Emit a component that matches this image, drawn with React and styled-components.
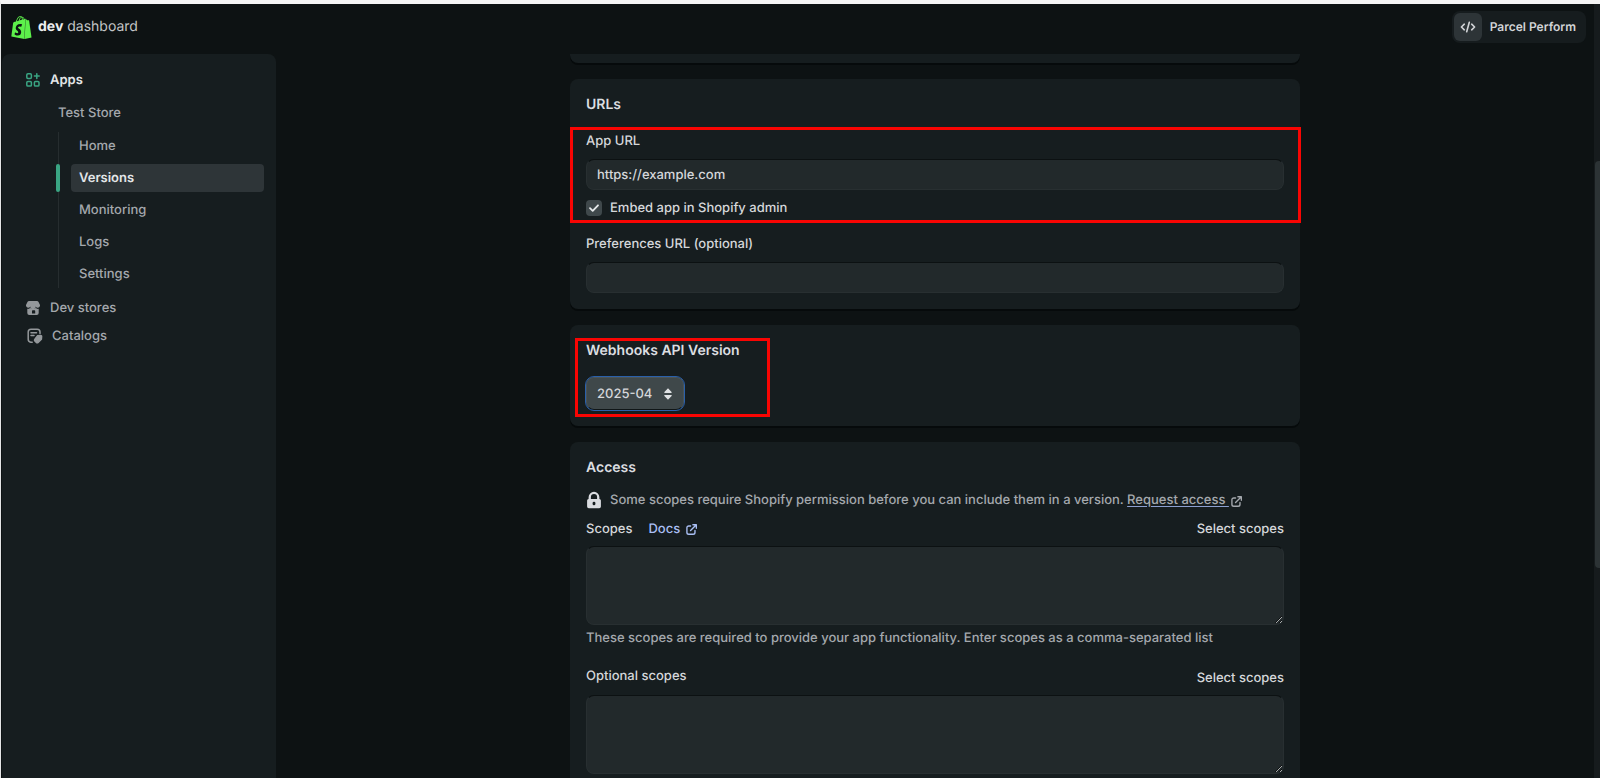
import React from "react";
import styled, { createGlobalStyle } from "styled-components";
import { SiShopify } from "react-icons/si";

const GlobalStyle = createGlobalStyle`
  *, *::before, *::after { box-sizing: border-box; }
  body {
    margin: 0;
    background: #0d1213;
    color: #d5d7da;
    font-family: Inter, "Liberation Sans", sans-serif;
    font-size: 13px;
    font-weight: 500;
    line-height: 20px;
    color-scheme: dark;
    text-rendering: geometricPrecision;
  }
  button, input, select, textarea { font: inherit; color: inherit; margin: 0; text-rendering: inherit; }
  a { color: inherit; text-decoration: none; }
  ul { list-style: none; margin: 0; padding: 0; }
  h2, p { margin: 0; }
`;

const Page = styled.div`
  height: 100vh;
  display: flex;
  overflow: hidden;
  border-top: 4px solid #f4f5f5;
  border-left: 1px solid #e4e5e5;
`;

const Shell = styled.div`
  flex: 1;
  min-width: 0;
  display: flex;
  flex-direction: column;
`;

const Header = styled.header`
  flex: none;
  height: 50px;
  padding: 0 8px 4px 9px;
  display: flex;
  align-items: center;
  justify-content: space-between;
`;

const Brand = styled.a`
  display: flex;
  align-items: center;
  gap: 5px;
  font-size: 14px;
  color: #c3c5c7;
  font-weight: 400;
  b { font-weight: 700; color: #eceeef; }
  svg { color: #5df04b; }
`;

const Account = styled.button`
  display: flex;
  align-items: center;
  gap: 8px;
  height: 32px;
  padding: 2px 10px 2px 2px;
  border: 0;
  border-radius: 8px;
  background: #161c1e;
  color: #d2d4d7;
  font-size: 12px;
  font-weight: 600;
`;

const AccountIcon = styled.span`
  width: 28px;
  height: 28px;
  display: grid;
  place-items: center;
  border-radius: 6px;
  background: #2d3437;
`;

const Body = styled.div`
  flex: 1;
  min-height: 0;
  display: flex;
`;

const Sidebar = styled.nav`
  flex: none;
  width: 274px;
  margin-left: 1px;
  padding: 12px 12px 12px 22px;
  border-radius: 8px 8px 0 0;
  background: #161d1f;
`;

const NavLink = styled.a`
  display: flex;
  align-items: center;
  gap: 9px;
  height: 28px;
  padding-left: 1px;
  color: ${(p) => (p.$active ? "#e3e6e8" : "#a4a8ad")};
  font-weight: ${(p) => (p.$active ? 600 : 500)};
  svg { flex: none; color: ${(p) => (p.$active ? "#3aa583" : "#94989b")}; }
`;

const StoreLink = styled.a`
  display: block;
  margin: 5px 0 5px 34px;
  height: 28px;
  line-height: 28px;
  color: #a4a8ad;
`;

const SubList = styled.ul`
  display: grid;
  gap: 4px;
  margin: 0 0 6px 34px;
  border-left: 1px solid #262d2f;
`;

const SubItem = styled.li`
  position: relative;
  padding-left: 12px;
  &::before {
    content: "";
    display: ${(p) => (p.$active ? "block" : "none")};
    position: absolute;
    left: -3px;
    top: 0;
    width: 4px;
    height: 100%;
    border-radius: 2px;
    background: #3aa583;
  }
`;

const SubLink = styled.a`
  display: block;
  height: 28px;
  line-height: 28px;
  padding-left: 8px;
  border-radius: 4px;
  background: ${(p) => (p.$active ? "#2e3538" : "transparent")};
  color: ${(p) => (p.$active ? "#e3e6e8" : "#a4a8ad")};
  font-weight: ${(p) => (p.$active ? 600 : 500)};
`;

const Main = styled.main`
  flex: 1;
  min-width: 0;
  overflow: hidden;
  display: flex;
  flex-direction: column;
  align-items: center;
  gap: 16px;
`;

const Card = styled.section`
  flex: none;
  width: 100%;
  max-width: 730px;
  padding: 16px;
  border-radius: 8px;
  background: #161d1f;
  box-shadow: 0 2px 0 #060a0b;
`;

const CardEnd = styled(Card)`
  height: 9px;
  padding: 0;
  border-radius: 0 0 8px 8px;
`;

const CardTitle = styled.h2`
  display: block;
  font-size: 14px;
  line-height: 20px;
  font-weight: 600;
  color: #dcdee1;
`;

const Marked = styled.div`
  position: relative;
  margin-top: 16px;
`;

const Outline = styled.div`
  position: absolute;
  inset: ${(p) => p.$inset};
  border: 3px solid #f90503;
  pointer-events: none;
`;

const Field = styled.div`
  display: grid;
  gap: 8px;
  margin-top: ${(p) => p.$top || 0}px;
`;

const TextInput = styled.input`
  width: 100%;
  height: 31px;
  padding: 0 10px;
  border: 1px solid #282f31;
  border-top-color: #0c1112;
  border-radius: 8px;
  background: #22292b;
  outline: 0;
`;

const CheckLabel = styled.label`
  display: flex;
  align-items: center;
  gap: 8px;
  margin-top: 8px;
`;

const CheckWrap = styled.span`
  display: grid;
  width: 16px;
  height: 16px;
  > * { grid-area: 1 / 1; }
  svg { pointer-events: none; color: #e6e9eb; }
`;

const Checkbox = styled.input`
  appearance: none;
  width: 16px;
  height: 16px;
  border-radius: 4px;
  background: #3f484b;
`;

const Versions = styled.div`
  position: relative;
  width: fit-content;
`;

const SelectWrap = styled.div`
  display: grid;
  width: 98px;
  margin-top: 16px;
  align-items: center;
  > * { grid-area: 1 / 1; }
  svg { justify-self: end; margin-right: 12px; pointer-events: none; color: #dfe2e4; }
`;

const Select = styled.select`
  appearance: none;
  width: 100%;
  height: 33px;
  padding: 0 10px;
  border: 1px solid #4b5456;
  border-bottom-color: #101617;
  border-radius: 8px;
  background: #3f484a;
  outline: 1px solid #2a60aa;
`;

const Notice = styled.p`
  display: flex;
  align-items: center;
  gap: 8px;
  margin: 12px 0 9px;
  color: #a4a8ad;
`;

const AccessLink = styled.a`
  svg { margin-left: 2px; vertical-align: -3px; }
  span { text-decoration: underline; text-decoration-color: #8c9fd0; text-underline-offset: 2px; white-space: pre; }
`;

const ScopeHead = styled.div`
  display: flex;
  align-items: ${(p) => (p.$offset ? "flex-end" : "center")};
  gap: 16px;
  height: ${(p) => (p.$offset ? 22 : 20)}px;
  margin-bottom: 7px;
  label { align-self: flex-start; }
`;

const DocsLink = styled.a`
  display: flex;
  align-items: center;
  gap: 6px;
  color: #a9bff4;
`;

const PlainButton = styled.button`
  margin-left: auto;
  padding: 0;
  border: 0;
  background: none;
`;

const TextArea = styled.textarea`
  display: block;
  width: 100%;
  height: 79px;
  padding: 6px 10px;
  border: 1px solid #282f31;
  border-top-color: #0c1112;
  border-radius: 8px;
  background: #22292b;
  outline: 0;
  resize: vertical;
`;

const Help = styled.p`
  margin: 3px 0 18px;
  color: #a4a8ad;
`;

const ScrollTrack = styled.div`
  flex: none;
  width: 6px;
  padding-top: 157px;
  background: #161b1d;
`;

const ScrollThumb = styled.div`
  margin-left: 1px;
  height: 66%;
  border-radius: 4px 0 0 4px;
  background: #2c3335;
`;

const AppsIcon = () => (
  <svg width="16" height="16" viewBox="0 0 16 16" fill="none" stroke="currentColor" strokeWidth="1.5" strokeLinecap="round">
    <rect x="1.8" y="1.8" width="4.6" height="4.6" rx="1.1" />
    <rect x="1.8" y="9.4" width="4.6" height="4.6" rx="1.1" />
    <rect x="9.4" y="9.4" width="4.6" height="4.6" rx="1.1" />
    <path d="M11.8 1.7v4.8M9.4 4.1h4.8" />
  </svg>
);

const StoreIcon = () => (
  <svg width="16" height="16" viewBox="0 0 16 16" fill="currentColor">
    <path d="M4 1h8c.6 0 1.100.3 1.400.8l1.500 3c.2.300.2.700.1 1A2.300 2.300 0 0 1 10.700 6.600 2.300 2.300 0 0 1 5.300 6.600 2.300 2.300 0 0 1 1 5.800c-.1-.3 0-.7.1-1l1.500-3C2.900 1.300 3.400 1 4 1z" />
    <path fillRule="evenodd" d="M2.300 8.800c1 .3 2.100 0 3-.7 1.600 1.200 3.800 1.200 5.400 0 .9.7 2 1 3 .7V13a2 2 0 0 1-2 2H4.300a2 2 0 0 1-2-2zM8 10.200c-.6 0-1 .4-1 1v2.300h3.200v-2.300c0-.6-.4-1-1-1z" />
  </svg>
);

const CatalogIcon = () => (
  <svg width="18" height="18" viewBox="0 0 18 18" fill="none" stroke="currentColor" strokeWidth="1.5" strokeLinecap="round">
    <path d="M7.200 15.300H5.800a3 3 0 0 1-2.600-3V5A2.800 2.800 0 0 1 6 2.200h6.200A2.800 2.800 0 0 1 15 5v1.500" />
    <path d="M6 5.700h5.500M6 8.600h3" />
    <path d="M12.600 8.700l3-.3a.9.900 0 0 1 1 1l-.2 2.800-3.300 3.300a1.200 1.200 0 0 1-1.700 0l-1.500-1.500a1.200 1.200 0 0 1 0-1.700z" fill="currentColor" />
  </svg>
);

const CodeIcon = () => (
  <svg width="16" height="16" viewBox="0 0 16 16" fill="none" stroke="currentColor" strokeWidth="1.6" strokeLinecap="round" strokeLinejoin="round">
    <path d="M4.300 5.200L1.400 8l2.900 2.800M11.700 5.200L14.600 8l-2.900 2.800M9.300 3.200L6.700 12.800" />
  </svg>
);

const CheckIcon = () => (
  <svg width="16" height="16" viewBox="0 0 16 16" fill="none" stroke="currentColor" strokeWidth="1.8" strokeLinecap="round" strokeLinejoin="round">
    <path d="M4 8.200l2.700 2.600L12 5.300" />
  </svg>
);

const SortIcon = () => (
  <svg width="8" height="12" viewBox="0 0 8 12" fill="currentColor">
    <path d="M4 .2L7.600 4c.3.400.1.900-.4.900H.8c-.5 0-.7-.5-.4-.900zM4 11.800L.4 8c-.3-.4-.1-.9.4-.9h6.400c.5 0 .7.500.4.900z" />
  </svg>
);

const LockIcon = () => (
  <svg width="16" height="18" viewBox="0 0 16 18" fill="#dadce0">
    <path fillRule="evenodd" d="M2.600 8V6.200a5.400 5.400 0 0 1 10.800 0V8a1.500 1.500 0 0 1 1.500 1.500v6A1.700 1.700 0 0 1 13.200 17.200H2.800a1.700 1.700 0 0 1-1.700-1.700v-6A1.500 1.500 0 0 1 2.600 8zm2.300 0h6.200V6.200a3.100 3.100 0 0 0-6.200 0zM8 10.700a1.400 1.400 0 0 0-1.400 1.400v.8a1.400 1.400 0 0 0 2.800 0v-.8A1.400 1.400 0 0 0 8 10.700z" />
  </svg>
);

const ExternalIcon = () => (
  <svg width="11" height="11" viewBox="0 0 12 12" fill="none" stroke="currentColor" strokeWidth="1.5" strokeLinecap="round" strokeLinejoin="round">
    <path d="M5 2.200H3A2 2 0 0 0 1 4.200v5a2 2 0 0 0 2 2h4.800a2 2 0 0 0 2-2V7M7.500.8h3.800v3.800M11 1L5 7.200" />
  </svg>
);

const subPages = ["Home", "Versions", "Monitoring", "Logs", "Settings"];

export default function App() {
  return (
    <Page>
      <GlobalStyle />
      <Shell>
        <Header>
          <Brand href="#">
            <SiShopify size={23} />
            <span><b>dev</b> dashboard</span>
          </Brand>
          <Account type="button">
            <AccountIcon><CodeIcon /></AccountIcon>
            Parcel Perform
          </Account>
        </Header>
        <Body>
          <Sidebar>
            <NavLink href="#" $active><AppsIcon />Apps</NavLink>
            <StoreLink href="#">Test Store</StoreLink>
            <SubList>
              {subPages.map((name) => (
                <SubItem key={name} $active={name === "Versions"}>
                  <SubLink href="#" $active={name === "Versions"}>{name}</SubLink>
                </SubItem>
              ))}
            </SubList>
            <NavLink href="#"><StoreIcon />Dev stores</NavLink>
            <NavLink href="#"><CatalogIcon />Catalogs</NavLink>
          </Sidebar>
          <Main>
            <CardEnd />
            <Card>
              <CardTitle>URLs</CardTitle>
              <Marked>
                <Field>
                  <label htmlFor="app-url">App URL</label>
                  <TextInput id="app-url" defaultValue="https://example.com" />
                </Field>
                <CheckLabel>
                  <CheckWrap>
                    <Checkbox type="checkbox" defaultChecked />
                    <CheckIcon />
                  </CheckWrap>
                  Embed app in Shopify admin
                </CheckLabel>
                <Outline $inset="-4px -17px -5px -16px" />
              </Marked>
              <Field $top={16}>
                <label htmlFor="preferences-url">Preferences URL (optional)</label>
                <TextInput id="preferences-url" />
              </Field>
            </Card>
            <Card>
              <Versions>
                <CardTitle as="label" htmlFor="api-version">Webhooks API Version</CardTitle>
                <SelectWrap>
                  <Select id="api-version" defaultValue="2025-04">
                    <option>2025-04</option>
                  </Select>
                  <SortIcon />
                </SelectWrap>
                <Outline $inset="-3px -30px -7px -11px" />
              </Versions>
            </Card>
            <Card>
              <CardTitle>Access</CardTitle>
              <Notice>
                <LockIcon />
                <span>
                  Some scopes require Shopify permission before you can include them in a version.{" "}
                  <AccessLink href="#"><span>Request access </span><ExternalIcon /></AccessLink>
                </span>
              </Notice>
              <ScopeHead>
                <label htmlFor="scopes">Scopes</label>
                <DocsLink href="#">Docs <ExternalIcon /></DocsLink>
                <PlainButton type="button">Select scopes</PlainButton>
              </ScopeHead>
              <TextArea id="scopes" />
              <Help>These scopes are required to provide your app functionality. Enter scopes as a comma-separated list</Help>
              <ScopeHead $offset>
                <label htmlFor="optional-scopes">Optional scopes</label>
                <PlainButton type="button">Select scopes</PlainButton>
              </ScopeHead>
              <TextArea id="optional-scopes" />
            </Card>
          </Main>
        </Body>
      </Shell>
      <ScrollTrack><ScrollThumb /></ScrollTrack>
    </Page>
  );
}
